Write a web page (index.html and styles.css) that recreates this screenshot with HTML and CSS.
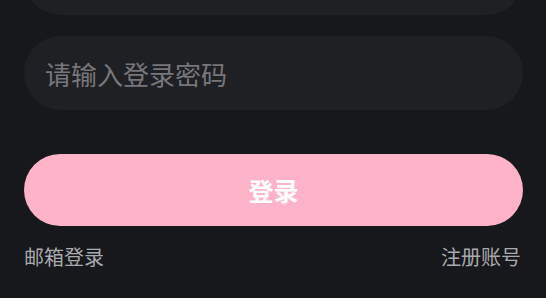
FILE: index.html
```html
<!DOCTYPE html>
<html lang="zh-CN">
<head>
  <meta charset="UTF-8" />
  <meta name="viewport" content="width=device-width, initial-scale=1.0"/>
  <title>登录</title>
  <link rel="stylesheet" href="styles.css">
</head>
<body>
  <div class="login-form">
    <input type="text" class="field" placeholder="请输入手机号" />
    <input type="password" class="field" placeholder="请输入登录密码" />

    <button class="login-btn">登录</button>

    <div class="links">
      <a href="#" class="link">邮箱登录</a>
      <a href="#" class="link">注册账号</a>
    </div>
  </div>
</body>
</html>
```

FILE: styles.css
```css
* {
  box-sizing: border-box;
}

body {
  margin: 0;
  background: #17181b;
  font-family: 'Noto Sans CJK SC', 'Noto Sans', sans-serif;
  overflow: hidden;
}

.login-form {
  display: flex;
  flex-direction: column;
  width: 499px;
  margin: -59px 0 0 24px;
}

.field {
  height: 74px;
  margin-bottom: 21px;
  padding: 0 21px;
  border: none;
  border-radius: 37px;
  background: #1f2024;
  color: #ddd;
  font-family: inherit;
  font-size: 26px;
  outline: none;
}

.field::placeholder {
  color: #77777b;
}

.login-btn {
  height: 72px;
  margin-top: 23px;
  border: none;
  border-radius: 36px;
  background: #ffb3c8;
  color: #fff;
  font-family: inherit;
  font-size: 25px;
  font-weight: bold;
  cursor: pointer;
}

.links {
  display: flex;
  justify-content: space-between;
  margin-top: 16px;
  padding-right: 2px;
}

.link {
  color: #a9aaad;
  font-size: 20px;
  text-decoration: none;
}
```
